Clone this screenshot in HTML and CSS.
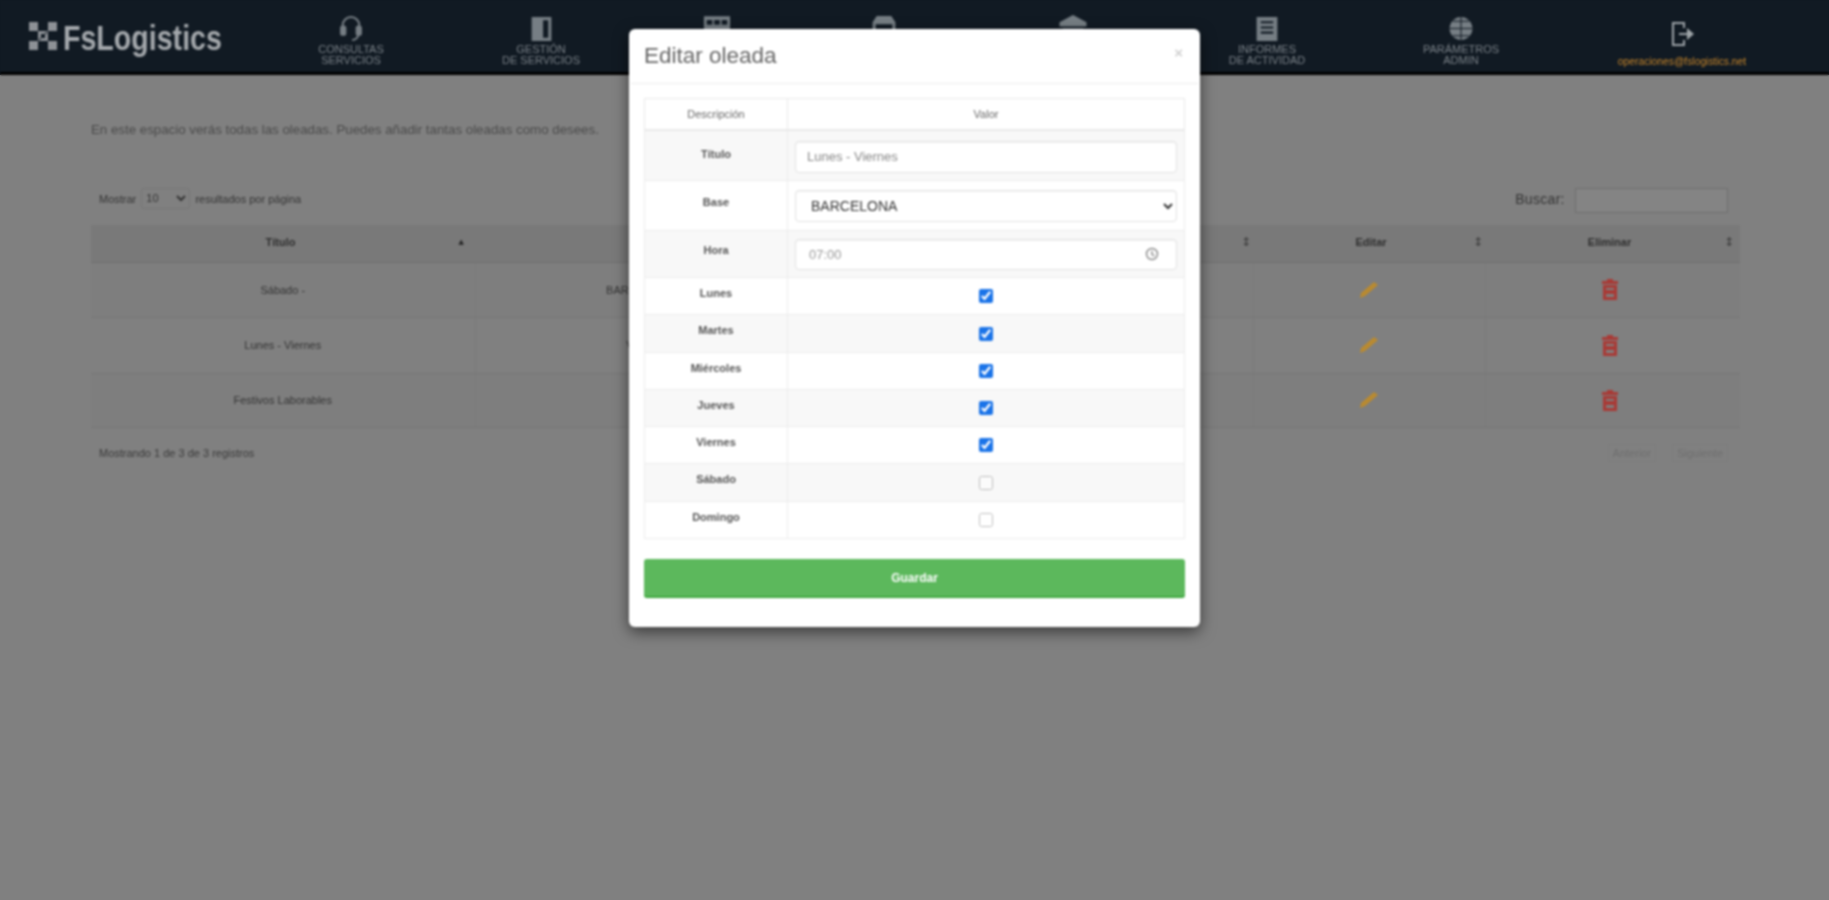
FILE: index.html
```html
<!DOCTYPE html>
<html lang="es">
<head>
<meta charset="utf-8">
<title>FsLogistics - Oleadas</title>
<link rel="stylesheet" href="styles.css">
</head>
<body>
<div class="screen">
  <header class="navbar">
    <a class="logo">
      <svg class="logo-mark" viewBox="0 0 28 28"><g fill="currentColor"><rect x="0" y="0" width="9" height="9"/><rect x="19" y="0" width="9" height="9"/><rect x="0" y="19" width="9" height="9"/><rect x="19" y="19" width="9" height="9"/><path d="M9 9h10l-2 3h-6zM9 19h10l-2-3h-6zM9 9l3 2v6l-3 2zM19 9l-3 2v6l3 2z"/></g></svg>
      <span class="logo-text">FsLogistics</span>
    </a>
    <nav class="menu">
      <a class="menu-item">
        <svg class="menu-icon" viewBox="0 0 24 26" fill="none" stroke="currentColor" stroke-width="2"><path d="M4 15V10a8 8 0 0 1 16 0v5"/><rect x="2.500" y="11" width="4" height="8" rx="1.500" fill="currentColor"/><rect x="17.500" y="11" width="4" height="8" rx="1.500" fill="currentColor"/><path d="M19 19c0 3-3 5-6 5"/></svg>
        <span>CONSULTAS<br>SERVICIOS</span>
      </a>
      <a class="menu-item">
        <svg class="menu-icon" viewBox="0 0 24 26"><path fill="currentColor" fill-rule="evenodd" d="M3 2h19v23H3zM14 5v17h5V5z"/></svg>
        <span>GESTIÓN<br>DE SERVICIOS</span>
      </a>
      <a class="menu-item">
        <svg class="menu-icon" viewBox="0 0 30 26"><path fill="currentColor" fill-rule="evenodd" d="M1 0h28v26H1zM4 4v5h6V4zM12 4v5h6V4zM20 4v5h6V4z"/></svg>
      </a>
      <a class="menu-item">
        <svg class="menu-icon" viewBox="0 0 24 26"><path fill="currentColor" d="M5 1h14l4 6v19h-3V9H4v17H1V7z"/></svg>
      </a>
      <a class="menu-item">
        <svg class="menu-icon" viewBox="0 0 26 26"><path fill="currentColor" d="M13 0l13 7v4H0V7z"/><rect x="3" y="13" width="20" height="12" fill="currentColor"/></svg>
      </a>
      <a class="menu-item">
        <svg class="menu-icon" viewBox="0 0 24 26"><path fill="currentColor" fill-rule="evenodd" d="M2 2h20v23H2zM6 6v2h12V6zM6 11v2h12v-2zM6 16v2h12v-2z"/></svg>
        <span>INFORMES<br>DE ACTIVIDAD</span>
      </a>
      <a class="menu-item">
        <svg class="menu-icon" viewBox="0 0 24 26"><circle cx="12" cy="13" r="11" fill="currentColor"/><path fill="none" stroke="#111a23" stroke-width="1" d="M1 13h22M12 2v22M4 6h16M4 20h16"/></svg>
        <span>PARÁMETROS<br>ADMIN</span>
      </a>
      <a class="menu-item user-item">
        <svg class="logout-icon" viewBox="0 0 24 26" fill="none" stroke="currentColor" stroke-width="2"><path d="M14 7V2H3v22h11v-5"/><path d="M9 13h11"/><path fill="currentColor" stroke="none" d="M17 7l7 6-7 6z"/></svg>
        <span class="user-mail">operaciones@fslogistics.net</span>
      </a>
    </nav>
  </header>

  <main class="content">
    <p class="intro">En este espacio verás todas las oleadas. Puedes añadir tantas oleadas como desees.</p>
    <div class="table-controls">
      <label class="length">Mostrar <select class="length-select"><option>10</option></select> resultados por página</label>
      <label class="search">Buscar: <input class="search-input" type="text"></label>
    </div>
    <table class="data-table">
      <colgroup>
        <col class="c-title"><col class="c-base"><col class="c-hour"><col class="c-days"><col class="c-edit"><col class="c-del">
      </colgroup>
      <thead>
        <tr>
          <th><div class="th-inner"><span></span><span>Título</span><span class="sort on">▲</span></div></th>
          <th><div class="th-inner"><span></span><span>Base</span><span class="sort">↕</span></div></th>
          <th><div class="th-inner"><span></span><span>Hora</span><span class="sort">↕</span></div></th>
          <th><div class="th-inner"><span></span><span>Días</span><span class="sort">↕</span></div></th>
          <th><div class="th-inner"><span></span><span>Editar</span><span class="sort">↕</span></div></th>
          <th><div class="th-inner"><span></span><span>Eliminar</span><span class="sort">↕</span></div></th>
        </tr>
      </thead>
      <tbody>
        <tr class="row-a">
          <td>Sábado -</td><td>BARCELONA</td><td>07:00</td><td>S</td>
          <td><svg class="pencil" viewBox="0 0 20 18"><path fill="currentColor" d="M15 1l4 3L6 15l-5 2 1-5z"/></svg></td>
          <td><svg class="trash" viewBox="0 0 16 21"><path fill="currentColor" fill-rule="evenodd" d="M5 0h6v2h5v3H0V2h5zM1 6h14v15H1zM4 9v2h8V9zM4 15v3h8v-3z"/></svg></td>
        </tr>
        <tr class="row-b">
          <td>Lunes - Viernes</td><td>VIGO</td><td>07:00</td><td>L-V</td>
          <td><svg class="pencil" viewBox="0 0 20 18"><path fill="currentColor" d="M15 1l4 3L6 15l-5 2 1-5z"/></svg></td>
          <td><svg class="trash" viewBox="0 0 16 21"><path fill="currentColor" fill-rule="evenodd" d="M5 0h6v2h5v3H0V2h5zM1 6h14v15H1zM4 9v2h8V9zM4 15v3h8v-3z"/></svg></td>
        </tr>
        <tr class="row-c">
          <td>Festivos Laborables</td><td>-</td><td>07:00</td><td>F</td>
          <td><svg class="pencil" viewBox="0 0 20 18"><path fill="currentColor" d="M15 1l4 3L6 15l-5 2 1-5z"/></svg></td>
          <td><svg class="trash" viewBox="0 0 16 21"><path fill="currentColor" fill-rule="evenodd" d="M5 0h6v2h5v3H0V2h5zM1 6h14v15H1zM4 9v2h8V9zM4 15v3h8v-3z"/></svg></td>
        </tr>
      </tbody>
    </table>
    <div class="table-footer">
      <span>Mostrando 1 de 3 de 3 registros</span>
      <div class="pager"><a>Anterior</a><a>Siguiente</a></div>
    </div>
  </main>

  <div class="modal-layer">
    <section class="modal">
      <div class="modal-header">
        <h2 class="modal-title">Editar oleada</h2>
        <span class="modal-close">×</span>
      </div>
      <div class="modal-body">
        <table class="form-table">
          <colgroup><col class="f-label"><col></colgroup>
          <thead><tr><th>Descripción</th><th>Valor</th></tr></thead>
          <tbody>
            <tr class="r-title"><td class="lbl">Título</td><td class="val"><input class="control text" type="text" value="Lunes - Viernes"></td></tr>
            <tr class="r-base"><td class="lbl">Base</td><td class="val"><select class="control pick"><option>BARCELONA</option></select></td></tr>
            <tr class="r-hour"><td class="lbl">Hora</td><td class="val"><div class="control time"><span>07:00</span><svg class="clock" viewBox="0 0 14 14" fill="none" stroke="currentColor" stroke-width="1.400"><circle cx="7" cy="7" r="5.500"/><path d="M7 4v3.500l2.500 1.500"/></svg></div></td></tr>
            <tr class="r-day"><td class="lbl">Lunes</td><td class="chk"><input type="checkbox" checked></td></tr>
            <tr class="r-day tall"><td class="lbl">Martes</td><td class="chk"><input type="checkbox" checked></td></tr>
            <tr class="r-day"><td class="lbl">Miércoles</td><td class="chk"><input type="checkbox" checked></td></tr>
            <tr class="r-day"><td class="lbl">Jueves</td><td class="chk"><input type="checkbox" checked></td></tr>
            <tr class="r-day"><td class="lbl">Viernes</td><td class="chk"><input type="checkbox" checked></td></tr>
            <tr class="r-day tall"><td class="lbl">Sábado</td><td class="chk"><input class="off" type="checkbox"></td></tr>
            <tr class="r-day"><td class="lbl">Domingo</td><td class="chk"><input class="off" type="checkbox"></td></tr>
          </tbody>
        </table>
        <button class="save" type="button">Guardar</button>
      </div>
    </section>
  </div>
</div>
</body>
</html>
```
FILE: styles.css
```css
html { background: linear-gradient(#111a23 75px, #808080 75px); }
body {
  margin: 0;
  height: 900px;
  overflow: hidden;
  font-family: "Liberation Sans", Arial, sans-serif;
  color: #333;
}
.screen {
  position: relative;
  height: 900px;
  background: #808080;
  filter: blur(1px);
  overflow: hidden;
}

/* Navbar */
.navbar {
  display: flex;
  height: 72px;
  padding-left: 29px;
  background: #111a23;
  border-bottom: 3px solid #000;
}
.logo {
  display: flex;
  align-items: center;
  gap: 6px;
  width: 227px;
  height: 72px;
  color: #a4a8ac;
}
.logo-mark { width: 28px; height: 28px; flex: none; color: #8d9196; }
.logo-text {
  font-weight: 700;
  font-size: 35px;
  line-height: 40px;
  padding-top: 4px;
  white-space: nowrap;
  transform: scaleX(0.817);
  transform-origin: left center;
}
.menu {
  display: grid;
  grid-template-columns: 190px 190px 162px 172px 206px 182px 206px 236px;
  height: 72px;
}
.menu-item {
  display: flex;
  flex-direction: column;
  align-items: center;
  color: #7b8288;
  font-size: 11px;
  line-height: 10.500px;
  text-align: center;
  padding-top: 15px;
}
.menu-icon { height: 27px; width: 28px; margin-bottom: 2px; color: #767e84; }
.user-item { padding-top: 21px; }
.logout-icon { width: 24px; height: 26px; color: #9ea4a8; }
.user-mail { color: #c8862a; font-size: 10.300px; margin-top: 10px; }

/* Page */
.content { padding: 47px 89px 0 91px; }
.intro {
  margin: 0;
  font-size: 13.300px;
  line-height: 16px;
  color: #4a4a4a;
}
.table-controls {
  display: flex;
  justify-content: space-between;
  align-items: center;
  height: 26px;
  margin: 49px 12px 12px 8px;
  font-size: 11px;
}
.length { margin-bottom: 4px; }
.length-select {
  width: 49px;
  height: 21px;
  margin: 0 2px;
  background: #808080;
  border: 1px solid #767676;
  border-radius: 3px;
  color: #333;
  font-size: 11px;
  font-family: inherit;
}
.search { font-size: 14px; letter-spacing: 0.3px; }
.search-input {
  width: 153px;
  height: 25px;
  box-sizing: border-box;
  margin-left: 6px;
  background: #848484;
  border: 1px solid #6e6e6e;
  vertical-align: middle;
}
.data-table {
  width: 1649px;
  table-layout: fixed;
  border-collapse: collapse;
  font-size: 11px;
  text-align: center;
}
.c-title { width: 384px; }
.c-base { width: 330px; }
.c-hour { width: 225px; }
.c-days { width: 223px; }
.c-edit { width: 232px; }
.c-del { width: 255px; }
.data-table th {
  box-sizing: border-box;
  height: 37px;
  padding: 0 2px 3px 6px;
  background: #797979;
  border-bottom: 1px solid #6f6f6f;
  font-weight: 700;
  color: #2e2e2e;
}
.data-table th:first-child { padding-right: 11px; }
.data-table th:last-child { padding: 0 6px 3px 0; }
.th-inner {
  display: grid;
  grid-template-columns: 1fr auto 1fr;
  align-items: center;
}
.sort { justify-self: end; font-size: 12px; font-weight: 700; color: #444; font-family: "DejaVu Sans", sans-serif; }
.sort.on { font-size: 7px; color: #222; }
.data-table td {
  padding: 0;
  border-bottom: 1px solid #767676;
  border-right: 1px solid #7a7a7a;
  color: #333;
}
.data-table td:last-child { border-right: 0; padding-right: 5px; }
.row-a td { height: 54px; background: #7e7e7e; }
.row-b td { height: 55px; background: #808080; }
.row-c td { height: 53px; background: #7e7e7e; }
.pencil { display: block; width: 20px; height: 18px; margin: 0 auto; color: #b98a30; }
.trash { display: block; width: 16px; height: 21px; margin: 0 auto; color: #a83a36; }
.table-footer {
  display: flex;
  justify-content: space-between;
  align-items: center;
  height: 20px;
  margin: 15px 12px 0 8px;
  font-size: 11px;
  color: #3a3a3a;
}
.pager { display: flex; gap: 16px; color: #6e6e6e; }
.pager a { padding: 2px 4px; border: 1px solid #7c7c7c; }

/* Modal */
.modal-layer {
  position: absolute;
  inset: 0;
  display: flex;
  justify-content: center;
  align-items: flex-start;
  padding-top: 29px;
}
.modal {
  width: 571px;
  height: 598px;
  background: #fff;
  border-radius: 6px;
  box-shadow: 0 5px 15px rgba(0, 0, 0, 0.55);
}
.modal-header {
  display: flex;
  justify-content: space-between;
  align-items: center;
  height: 54px;
  margin: 0 2px;
  padding: 0 13px;
  border-bottom: 1px solid #ececec;
}
.modal-title {
  margin: 0;
  font-size: 22.500px;
  font-weight: 400;
  color: #666;
}
.modal-close { font-size: 15px; font-weight: 700; color: #d0d0d0; margin: 0 0 7px; padding-right: 2px; }
.modal-body { padding: 14px 15px 0; }
.form-table {
  width: 541px;
  table-layout: fixed;
  border-collapse: collapse;
  font-size: 11px;
  text-align: center;
}
.f-label { width: 143px; }
.form-table th {
  box-sizing: border-box;
  height: 31px;
  padding: 0;
  font-weight: 400;
  color: #666;
  border: 1px solid #e9e9e9;
  border-bottom-width: 2px;
}
.form-table td { box-sizing: border-box; padding: 0; border: 1px solid #ececec; }
.form-table tbody tr:nth-child(odd) td { background: #f8f8f8; }
.lbl { vertical-align: top; font-weight: 700; color: #555; }
.form-table td.val { padding: 0 7px; }
.form-table .r-title td.val { padding-top: 3px; }
.r-title td { height: 51px; }
.r-base td { height: 50px; }
.r-hour td { height: 47px; }
.r-day td { height: 37px; }
.r-day.tall td { height: 38px; }
.form-table .r-title .lbl { padding-top: 17px; }
.form-table .r-base .lbl { padding-top: 15px; }
.form-table .r-hour .lbl { padding-top: 13px; }
.form-table .r-day .lbl { padding-top: 9px; }
.control {
  display: block;
  box-sizing: border-box;
  width: 100%;
  height: 32px;
  background: #fff;
  border: 1px solid #e2e2e2;
  border-radius: 4px;
  font-family: inherit;
  box-shadow: inset 0 1px 1px rgba(0, 0, 0, 0.05);
}
.text { padding: 0 11px; font-size: 13px; color: #888; }
.pick { padding: 0 11px; font-size: 14px; color: #333; }
.time {
  display: flex;
  justify-content: space-between;
  align-items: center;
  height: 31px;
  padding: 0 17px 0 13px;
  font-size: 13px;
  color: #999;
}
.clock { width: 14px; height: 14px; color: #888; }
.chk { text-align: center; vertical-align: middle; }
.chk input { display: block; width: 14px; height: 14px; margin: 0 auto; accent-color: #1a73e8; }
.chk input.off { opacity: 0.45; }
.save {
  display: block;
  width: 100%;
  height: 39px;
  margin-top: 20px;
  padding: 0;
  background: #5cb85c;
  border: 0;
  border-bottom: 2px solid #3fa83f;
  border-radius: 3px;
  color: #fff;
  font-family: inherit;
  font-size: 12px;
  font-weight: 700;
}
```
